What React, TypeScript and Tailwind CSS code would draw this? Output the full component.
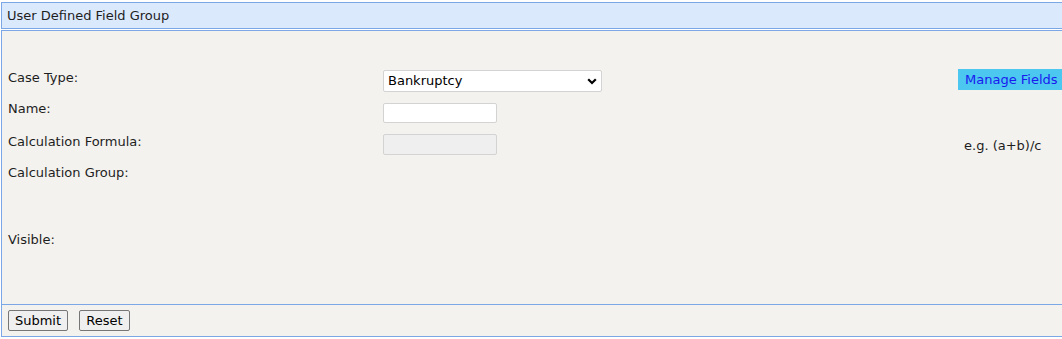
import React from "react";

const font = { fontFamily: '"DejaVu Sans", Verdana, sans-serif' };

const Row = ({ label, top, children, right }: { label: string; top: string; children?: React.ReactNode; right?: React.ReactNode }) => (
  <div className={`flex items-start ${top}`}>
    <div className="w-[381px] shrink-0 pl-[6px] leading-[16px] text-[13px] text-[#1e1e1e]">{label}</div>
    <div className="w-[575px] shrink-0">{children}</div>
    <div className="flex-1">{right}</div>
  </div>
);

const App = () => {
  return (
    <div className="w-[1062px] h-[339px] overflow-hidden bg-white" style={font}>
      <div className="w-[1080px] pl-[1px] pt-[2px]">
        <div className="h-[27px] border border-[#7ba7e7] bg-[#dbe9fd] flex items-center pl-[5px] text-[13px] text-[#1e1e1e]">
          User Defined Field Group
        </div>
        <div className="mt-[1px] border border-[#7ba7e7] bg-[#f3f2ee]">
          <div className="h-[273px] pt-[39px]">
            <Row
              label="Case Type:"
              top=""
              right={
                <div className="h-[21px] -mt-[1px] bg-[#4bc7f0] pl-[7px] flex items-center text-[13px] text-[#1a1aef]">
                  Manage Fields
                </div>
              }
            >
              <div className="relative w-[219px] h-[22px] bg-white border border-[#d3d3d3] rounded-[2px] flex items-center pl-[4px] text-[13px] text-black">
                Bankruptcy
                <svg className="absolute right-[4px] top-[7px]" width="10" height="7" viewBox="0 0 10 7">
                  <path d="M1.2 1.2 L5 5 L8.8 1.2" fill="none" stroke="#000" strokeWidth="2.2" />
                </svg>
              </div>
            </Row>
            <Row label="Name:" top="mt-[9px]">
              <input className="mt-[2px] block w-[114px] h-[20px] bg-white border border-[#d3d3d3] rounded-[2px] outline-none" />
            </Row>
            <Row
              label="Calculation Formula:"
              top="mt-[11px]"
              right={<div className="pt-[4px] pl-[6px] leading-[16px] text-[13px] text-[#1e1e1e]">e.g. (a+b)/c</div>}
            >
              <input disabled className="block w-[114px] h-[21px] bg-[#efefef] border border-[#d3d3d3] rounded-[2px]" />
            </Row>
            <Row label="Calculation Group:" top="mt-[10px]" />
            <Row label="Visible:" top="mt-[51px]" />
          </div>
          <div className="h-[32px] border-t border-[#7ba7e7] flex items-start gap-[11px] pl-[6px] pt-[5px]">
            <button className="w-[60px] h-[21px] bg-[#efefef] border border-[#767676] rounded-[2px] text-[13px] text-black leading-none">
              Submit
            </button>
            <button className="w-[51px] h-[21px] bg-[#efefef] border border-[#767676] rounded-[2px] text-[13px] text-black leading-none">
              Reset
            </button>
          </div>
        </div>
      </div>
    </div>
  );
};

export default App;
